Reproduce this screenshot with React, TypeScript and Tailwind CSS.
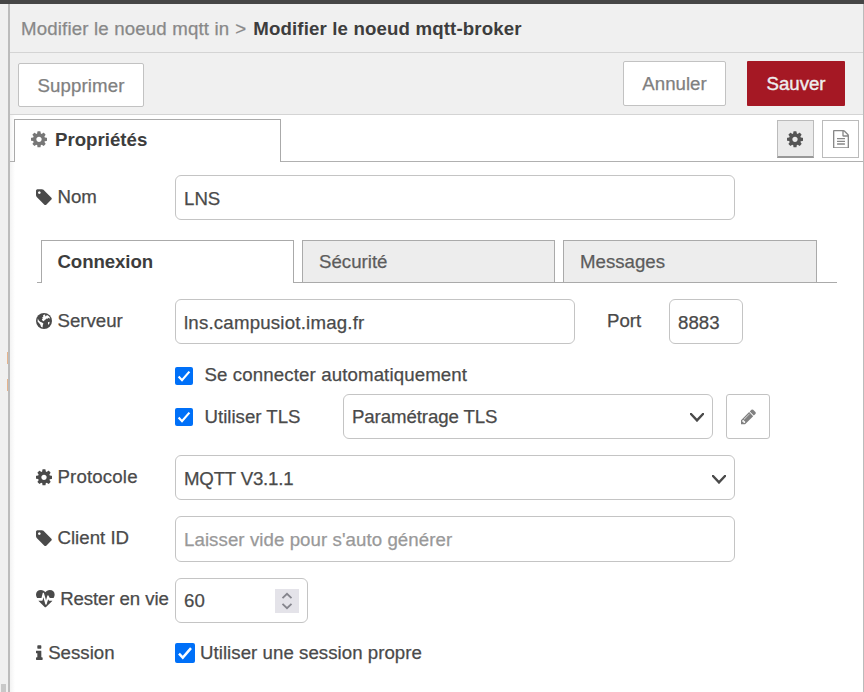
import React from "react";

const COG =
  "M1152 896q0-106-75-181t-181-75-181 75-75 181 75 181 181 75 181-75 75-181zm512-109v222q0 12-8 23t-20 13l-185 28q-19 54-39 91 35 50 107 138 10 12 10 25t-9 23q-27 37-99 108t-94 71q-12 0-26-9l-138-108q-44 23-91 38-16 136-29 186-7 28-36 28h-222q-14 0-24.5-8.5t-11.5-21.5l-28-184q-49-16-90-37l-141 107q-10 9-25 9-14 0-25-11-126-114-165-168-7-10-7-23 0-12 8-23 15-21 51-66.5t54-70.5q-27-50-41-99l-183-27q-13-2-21-12.5t-8-23.5v-222q0-12 8-23t19-13l186-28q14-46 39-92-40-57-107-138-10-12-10-24 0-10 9-23 26-36 98.5-107.5t94.5-71.5q13 0 26 10l138 107q44-23 91-38 16-136 29-186 7-28 36-28h222q14 0 24.5 8.5t11.5 21.5l28 184q49 16 90 37l142-107q9-9 24-9 13 0 25 10 129 119 165 170 7 8 7 22 0 12-8 23-15 21-51 66.5t-54 70.5q26 50 41 98l183 28q13 2 21 12.5t8 23.5z";
const TAG =
  "M576 448q0-53-37.5-90.5t-90.5-37.5-90.5 37.5-37.5 90.5 37.5 90.5 90.5 37.5 90.5-37.5 37.5-90.5zm1067 576q0 53-37 90l-491 492q-39 37-91 37-53 0-90-37l-715-716q-38-37-64.5-101t-26.5-117v-416q0-52 38-90t90-38h416q53 0 117 26.5t102 64.5l715 714q37 39 37 91z";
const PENCIL =
  "M491 1536l91-91-235-235-91 91v107h128v128h107zm523-928q0-22-22-22-10 0-17 7l-542 542q-7 7-7 17 0 22 22 22 10 0 17-7l542-542q7-7 7-17zm-54-192l416 416-832 832h-416v-416zm683 96q0 53-37 90l-166 166-416-416 166-165q36-38 90-38 53 0 91 38l235 234q37 39 37 91z";
const FILE =
  "M1596 380q28 28 48 76t20 88v1152q0 40-28 68t-68 28h-1344q-40 0-68-28t-28-68v-1600q0-40 28-68t68-28h896q40 0 88 20t76 48zm-444-244v376h376q-10-29-22-41l-313-313q-12-12-41-22zm384 1528v-1024h-416q-40 0-68-28t-28-68v-416h-768v1536h1280zm-1024-864q0-14 9-23t23-9h704q14 0 23 9t9 23v64q0 14-9 23t-23 9h-704q-14 0-23-9t-9-23v-64zm736 224q14 0 23 9t9 23v64q0 14-9 23t-23 9h-704q-14 0-23-9t-9-23v-64q0-14 9-23t23-9h704zm0 256q14 0 23 9t9 23v64q0 14-9 23t-23 9h-704q-14 0-23-9t-9-23v-64q0-14 9-23t23-9h704z";
const INFO =
  "M1216 1344v128q0 26-19 45t-45 19h-512q-26 0-45-19t-19-45v-128q0-26 19-45t45-19h64v-384h-64q-26 0-45-19t-19-45v-128q0-26 19-45t45-19h384q26 0 45 19t19 45v576h64q26 0 45 19t19 45zm-128-1152v192q0 26-19 45t-45 19h-256q-26 0-45-19t-19-45v-192q0-26 19-45t45-19h256q26 0 45 19t19 45z";
const HEART =
  "M1280 1024h305q-5 6-10 10.5t-9 7.5l-3 4-623 600q-18 18-44 18t-44-18l-624-602q-5-2-21-20h369q22 0 39.5-13.5t22.5-34.5l70-281 190 667q6 20 23 33t39 13q21 0 38-13t23-33l146-485 56 112q18 35 57 35zm512-556q0 145-103 300h-369l-111-221q-8-17-25.5-27t-36.5-8q-45 5-56 46l-129 430-196-686q-6-20-23.5-33t-39.5-13-39 13.5-22 34.5l-116 464h-423q-103-155-103-300 0-220 127-344t351-124q62 0 126.5 21.5t120 58 95.5 68.5 76 68q36-36 76-68t95.5-68.5 120-58 126.5-21.5q224 0 351 124t127 344z";

function Icon({ d, box = "128 0 1536 1792", className = "w-4 h-[18.67px]" }: { d: string; box?: string; className?: string }) {
  return (
    <svg viewBox={box} className={`shrink-0 ${className}`} fill="currentColor">
      <path d={d} />
    </svg>
  );
}

function Globe() {
  return (
    <svg viewBox="0 0 16 16" className="h-4 w-4 shrink-0">
      <circle cx="8" cy="8" r="8" fill="#4a4a4a" />
      <path
        fill="#fff"
        d="M8.2 1.5 9.6 1.9 8.8 3 9.9 3.3 11 2 13 3.2 14.2 5.2 13.4 5.4 12.6 4.8 11.6 5.8 10.6 5.4 9.6 6.6 8.6 7 8 8.2 6.6 7.8 5.8 6.6 6.8 5.6 6.2 4.6 7.4 3.6 7 2.4zM1.8 5.6 2.8 7.4 4.2 8.8 6 9.4 7.4 10.6 6.8 12.2 6.6 14.4 5 13.8 4.4 11.8 3.2 10.2 1.6 8.4zM12 9.2 13.6 8.8 13.4 10.6 12 12z"
      />
    </svg>
  );
}

function Check({ className }: { className: string }) {
  return (
    <span className={`flex shrink-0 items-center justify-center rounded-[2px] bg-[#0070f8] ${className}`}>
      <svg viewBox="0 0 18 18" className="h-full w-full" fill="none" stroke="#fff" strokeWidth="2.2">
        <path d="M3.6 9.6 7 13.2 14.4 4.6" />
      </svg>
    </span>
  );
}

function Chevron() {
  return (
    <svg viewBox="0 0 14 9" className="mt-px h-[9px] w-[14px]" fill="none" stroke="#4a4a4a" strokeWidth="2.4">
      <path d="M1 1 7 7.4 13 1" strokeLinecap="round" />
    </svg>
  );
}

const field = "flex shrink-0 items-center rounded-[6px] border border-[#c4c4c4] bg-white px-2";

function Label({ icon, children, className = "" }: { icon: React.ReactNode; children: React.ReactNode; className?: string }) {
  return (
    <div className={`flex w-[139px] shrink-0 items-center gap-[5.5px] whitespace-nowrap ${className}`}>
      {icon}
      <span>{children}</span>
    </div>
  );
}

export default function App() {
  return (
    <div className="flex h-[692px] w-[864px] flex-col overflow-hidden bg-white font-['Liberation_Sans',Arial,sans-serif] text-[18.67px] leading-6 text-[#4a4a4a] [-webkit-text-stroke:0.25px]">
      <div className="h-1 shrink-0 bg-[#464646]" />
      <div className="flex min-h-0 flex-1">
        <div className="flex w-[10px] shrink-0 flex-col border-r-2 border-[#bcbcbc] bg-[#f0f0f0]">
          <div className="mt-[348px] ml-auto h-3 w-px bg-[#e5b48e]" />
          <div className="mt-[15px] ml-auto h-3 w-px bg-[#e5b48e]" />
          <div className="mt-auto ml-px h-2 w-[5px] bg-[#c8c8c8]" />
        </div>
        <div className="flex w-[854px] flex-col border-r border-[#bbb] bg-gradient-to-r from-[#f3f3f3] to-white to-[5px]">
          <header className="flex h-[49px] shrink-0 items-center gap-1.5 border-b border-[#d4d4d4] bg-[#f0f0f0] pt-px pl-[11px] whitespace-nowrap text-[#888]">
            <span className="tracking-[0.16px]">Modifier le noeud mqtt in</span>
            <span className="w-[12px]">&gt;</span>
            <b className="tracking-[0.14px] text-[#3d3d3d] [-webkit-text-stroke:0]">Modifier le noeud mqtt-broker</b>
          </header>
          <div className="flex h-[62px] shrink-0 items-start border-b border-[#d4d4d4] bg-[#f0f0f0] pl-2 text-[#808080]">
            <button className="mt-[10px] h-11 w-[126px] rounded-[2px] border border-[#c2c2c2] bg-white pt-px tracking-[0.1px]">Supprimer</button>
            <button className="mt-2 ml-[479px] h-[45px] w-[103px] rounded-[2px] border border-[#c2c2c2] bg-white pt-px">Annuler</button>
            <button className="mt-2 ml-[21px] h-[45px] w-[98px] rounded-[1px] bg-[#a51824] pt-px text-[#eee] [-webkit-text-stroke:0.4px]">Sauver</button>
          </div>
          <div className="flex h-[47px] shrink-0 items-stretch pt-1">
            <div className="w-1 border-b border-[#b0b0b0]" />
            <div className="flex w-[267px] items-start border border-b-0 border-[#aaa] bg-white pt-[9px] pl-4">
              <Icon d={COG} className="mt-[1px] h-[18.67px] w-4 text-[#777]" />
              <b className="-mt-px ml-2 text-[#3d3d3d] [-webkit-text-stroke:0]">Propriétés</b>
            </div>
            <div className="flex flex-1 items-start justify-end gap-2 border-b border-[#b0b0b0] pt-px pr-1">
              <div className="flex h-[38px] w-[37px] items-center justify-center border border-b-2 border-[#bbb] border-b-[#999] bg-[#ebebeb] pt-px pr-px text-[#555]">
                <Icon d={COG} />
              </div>
              <div className="flex h-[38px] w-[37px] items-center justify-center border border-[#bbb] bg-white text-[#888]">
                <Icon d={FILE} />
              </div>
            </div>
          </div>

          <div className="mt-[13px] flex h-[45px] shrink-0 pl-[26px]">
            <Label className="h-[43px] pt-px" icon={<Icon d={TAG} />}>Nom</Label>
            <div className={`${field} h-[45px] w-[560px] pt-[2px]`}>LNS</div>
          </div>

          <div className="mt-5 ml-[27px] flex h-[43px] w-[800px] shrink-0">
            <div className="w-[4px] border-b border-[#aaa]" />
            <div className="flex w-[253px] items-center border border-b-0 border-[#aaa] bg-white pl-[15.5px] font-bold tracking-[-0.1px] text-[#3d3d3d] [-webkit-text-stroke:0]">Connexion</div>
            <div className="w-2 border-b border-[#aaa]" />
            <div className="flex w-[253px] items-center border border-[#aaa] bg-[#ededed] pl-4 text-[#5c5c5c]">Sécurité</div>
            <div className="w-2 border-b border-[#aaa]" />
            <div className="flex w-[254px] items-center border border-[#aaa] bg-[#ededed] pl-4 text-[#5c5c5c]">Messages</div>
            <div className="flex-1 border-b border-[#aaa]" />
          </div>

          <div className="mt-4 flex h-[45px] shrink-0 pl-[26px]">
            <Label className="h-[43px] pt-px" icon={<Globe />}>Serveur</Label>
            <div className={`${field} h-[45px] w-[400px] pt-[2px] tracking-[0.2px]`}>lns.campusiot.imag.fr</div>
            <span className="ml-8 w-[62px] leading-[44px]">Port</span>
            <div className={`${field} h-[45px] w-[74px] pt-[2px]`}>8883</div>
          </div>

          <div className="mt-[18px] flex h-6 shrink-0 items-center pl-[165px]">
            <Check className="mt-[3px] h-[18px] w-[18px]" />
            <span className="mt-[2px] ml-[11.5px] tracking-[0.12px]">Se connecter automatiquement</span>
          </div>

          <div className="mt-2 flex h-[45px] shrink-0 items-center pl-[165px]">
            <Check className="h-[18px] w-[18px]" />
            <span className="ml-[11.5px] w-[138.5px]">Utiliser TLS</span>
            <div className={`${field} h-[45px] w-[370px] justify-between tracking-[-0.1px]`}>
              Paramétrage TLS
              <Chevron />
            </div>
            <div className="ml-[13px] flex h-[45px] w-11 items-center justify-center rounded-[3px] border border-[#c2c2c2] text-[#808080]">
              <Icon d={PENCIL} className="h-[17.5px] w-[15px]" />
            </div>
          </div>

          <div className="mt-4 flex h-[45px] shrink-0 pl-[26px]">
            <Label className="h-[43px] pt-px tracking-[0.15px]" icon={<Icon d={COG} />}>Protocole</Label>
            <div className={`${field} h-[45px] w-[560px] justify-between pt-[2px] tracking-[-0.2px]`}>
              MQTT V3.1.1
              <Chevron />
            </div>
          </div>

          <div className="mt-4 flex h-[46px] shrink-0 pl-[26px]">
            <Label className="h-[43px] pt-px" icon={<Icon d={TAG} />}>Client ID</Label>
            <div className={`${field} h-[46px] w-[560px] pt-px tracking-[0.07px] text-[#999]`}>Laisser vide pour s'auto générer</div>
          </div>

          <div className="mt-4 flex h-[45px] shrink-0 pl-[26px]">
            <Label className="h-[42px] tracking-[-0.1px]" icon={<Icon d={HEART} box="0 0 1792 1792" className="h-[18.67px] w-[18.67px]" />}>Rester en vie</Label>
            <div className={`${field} h-[45px] w-[133px] justify-between`}>
              60
              <span className="flex h-6 w-6 items-center justify-center bg-[#e4e3e9]">
                <svg viewBox="0 0 24 24" className="h-6 w-6" fill="none" stroke="#85858d" strokeWidth="1.8">
                  <path d="M7.5 9.2 12 4.8 16.5 9.2M7.5 14.8 12 19.2 16.5 14.8" />
                </svg>
              </span>
            </div>
          </div>

          <div className="mt-[18px] flex h-6 shrink-0 items-center pl-[26px]">
            <Label icon={<Icon d={INFO} box="576 0 640 1792" className="h-[18.67px] w-[6.67px]" />}>Session</Label>
            <Check className="h-5 w-5" />
            <span className="ml-[5px] tracking-[0.04px]">Utiliser une session propre</span>
          </div>
        </div>
      </div>
    </div>
  );
}
